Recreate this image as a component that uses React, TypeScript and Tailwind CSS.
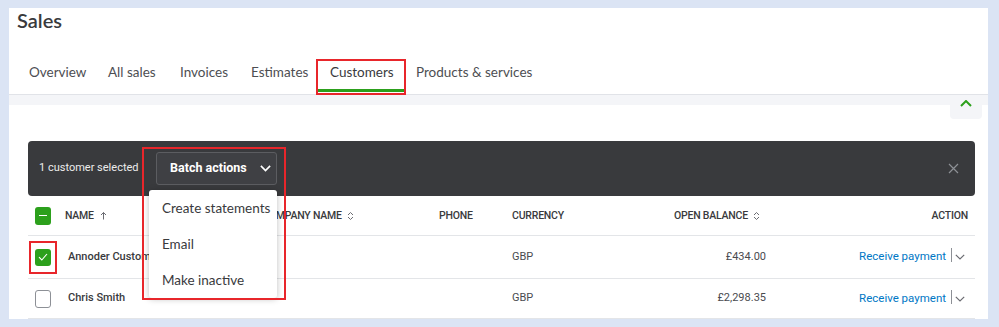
import React from "react";

const tabs: { t: string; w: string }[] = [
  { t: "Overview", w: "w-[79px]" },
  { t: "All sales", w: "w-[72px]" },
  { t: "Invoices", w: "w-[71px]" },
  { t: "Estimates", w: "w-[79px]" },
  { t: "Customers", w: "w-[86px]" },
  { t: "Products & services", w: "w-[140px]" },
];

function SortBoth() {
  return (
    <svg width="7" height="10" viewBox="0 0 7 10" className="ml-[5px]">
      <path d="M1 4 L3.5 1.5 L6 4" fill="none" stroke="#6b6c72" strokeWidth="1" />
      <path d="M1 6 L3.5 8.5 L6 6" fill="none" stroke="#6b6c72" strokeWidth="1" />
    </svg>
  );
}

function ChevronDown({ color = "#6b6c72", w = 10, sw = 1.2 }: { color?: string; w?: number; sw?: number }) {
  return (
    <svg width={w} height={w * 0.6} viewBox="0 0 10 6">
      <path d="M0.8 0.8 L5 5 L9.2 0.8" fill="none" stroke={color} strokeWidth={sw} />
    </svg>
  );
}

function Row({ name, checked, balance, h }: { name: string; checked: boolean; balance: string; h: string }) {
  return (
    <div className={`flex items-center ${h} border-b border-[#e3e5e8] text-[11px] text-[#393a3d]`}>
      <div className="w-[37px] pl-[7px] flex items-center">
        {checked ? (
          <div className="w-[16px] h-[17px] rounded-[3px] bg-[#2ca01c] flex items-center justify-center">
            <svg width="10" height="8" viewBox="0 0 10 8">
              <path d="M1 4.2 L3.8 7 L9 1" fill="none" stroke="white" strokeWidth="1.1" />
            </svg>
          </div>
        ) : (
          <div className="w-[16px] h-[18px] rounded-[3px] border border-[#8d9096] bg-white" />
        )}
      </div>
      <div className="w-[197px] pl-[3px] font-medium whitespace-nowrap overflow-hidden">{name}</div>
      <div className="w-[177px]" />
      <div className="w-[73px]" />
      <div className="w-[120px] text-[#4a4b4f]">GBP</div>
      <div className="w-[134px] text-right text-[#4a4b4f]">{balance}</div>
      <div className="flex-1 flex items-center justify-end pr-[10px]">
        <span className="text-[#0077c5] text-[11.5px]">Receive payment</span>
        <span className="ml-[5px] w-px h-[14px] bg-[#8d9096] mb-[4px]" />
        <span className="ml-[3px] flex items-center">
          <ChevronDown />
        </span>
      </div>
    </div>
  );
}

export default function App() {
  return (
    <div className="w-[999px] h-[327px] bg-[#dbe4f4] pt-[8px] pl-[9px] overflow-hidden font-['Roboto',sans-serif]">
      <div className="relative w-[979px] h-[311px] bg-white flex flex-col">
        <div className="h-[24px] pl-[8px] text-[20px] leading-[24px] text-[#393a3d] font-['Lato',sans-serif] font-semibold">
          Sales
        </div>
        <div className="mt-[24px] h-[36px] pl-[8px] flex font-['Lato',sans-serif] text-[13.5px] text-[#4d4e52]">
          {tabs.map(({ t, w }) => (
            <div
              key={t}
              className={`${w} pl-3 flex items-center border-b-[3px] whitespace-nowrap ${
                t === "Customers" ? "border-[#2ca01c] text-[#393a3d]" : "border-transparent"
              }`}
            >
              {t}
            </div>
          ))}
        </div>
        <div className="h-[3px] border-b border-[#e1e3e8]" />
        <div className="h-[10px] bg-[#f4f5f8]" />

        <div className="mt-[36px] ml-[19px] w-[947px]">
          <div className="h-[55px] bg-[#393a3d] rounded-[4px] flex items-center">
            <div className="w-[128px] pl-[11px] text-[11px] text-[#ececec] whitespace-nowrap">1 customer selected</div>
            <div className="w-[121px] h-[33px] rounded-[3px] border border-[#5c5d61] bg-[#3f4044] flex items-center pl-[13px]">
              <span className="text-white font-bold text-[12.5px]">Batch actions</span>
              <span className="ml-[13px] flex items-center">
                <ChevronDown color="#ffffff" w={11} sw={1.5} />
              </span>
            </div>
            <div className="flex-1" />
            <div className="mr-[16px] flex items-center">
              <svg width="11" height="11" viewBox="0 0 11 11">
                <path d="M1 1 L10 10 M10 1 L1 10" stroke="#8d9096" strokeWidth="1.2" />
              </svg>
            </div>
          </div>

          <div className="flex items-center h-[40px] border-b border-[#e3e5e8] text-[10.5px] font-medium text-[#393a3d] tracking-[-0.2px]">
            <div className="w-[37px] pl-[7px] flex items-center">
              <div className="w-[16px] h-[18px] rounded-[3px] bg-[#2ca01c] flex items-center justify-center">
                <div className="w-[8px] h-[1.5px] bg-white" />
              </div>
            </div>
            <div className="w-[197px] flex items-center">
              NAME
              <svg width="7" height="9" viewBox="0 0 7 9" className="ml-[6px]">
                <path d="M3.5 8.5 V1.5 M1 4 L3.5 1.5 L6 4" fill="none" stroke="#6b6c72" strokeWidth="1" />
              </svg>
            </div>
            <div className="w-[177px] flex items-center">
              COMPANY NAME
              <SortBoth />
            </div>
            <div className="w-[73px]">PHONE</div>
            <div className="w-[120px]">CURRENCY</div>
            <div className="w-[134px] flex items-center justify-end pr-[6px]">
              OPEN BALANCE
              <SortBoth />
            </div>
            <div className="flex-1 text-right pr-[7px]">ACTION</div>
          </div>

          <Row name="Annoder Customer" checked balance="£434.00" h="h-[43px]" />
          <Row name="Chris Smith" checked={false} balance="£2,298.35" h="h-[40px]" />
        </div>

        {/* collapse button */}
        <div className="absolute left-[941px] top-[87px] w-[32px] h-[24px] bg-[#f4f5f8] rounded-b-[4px] flex justify-center pt-[5px]">
          <svg width="12" height="7" viewBox="0 0 12 7">
            <path d="M1 6 L6 1 L11 6" fill="none" stroke="#2ca01c" strokeWidth="2" />
          </svg>
        </div>

        {/* dropdown menu */}
        <div className="absolute left-[140px] top-[182px] w-[128px] h-[108px] bg-white rounded-[3px] shadow-[0_1px_6px_rgba(0,0,0,0.25)] font-['Lato',sans-serif] text-[13.5px] text-[#393a3d] z-10">
          <div className="h-[36px] flex items-center pl-[13px] whitespace-nowrap">Create statements</div>
          <div className="h-[36px] flex items-center pl-[13px]">Email</div>
          <div className="h-[36px] flex items-center pl-[13px]">Make inactive</div>
        </div>

        {/* annotation boxes */}
        <div className="absolute left-[307px] top-[51px] w-[90px] h-[36px] border-2 border-[#e8262b] z-20" />
        <div className="absolute left-[133px] top-[139px] w-[144px] h-[153px] border-2 border-[#e8262b] z-20" />
        <div className="absolute left-[20px] top-[233px] w-[28px] h-[33px] border-2 border-[#e8262b] z-20" />
      </div>
    </div>
  );
}
